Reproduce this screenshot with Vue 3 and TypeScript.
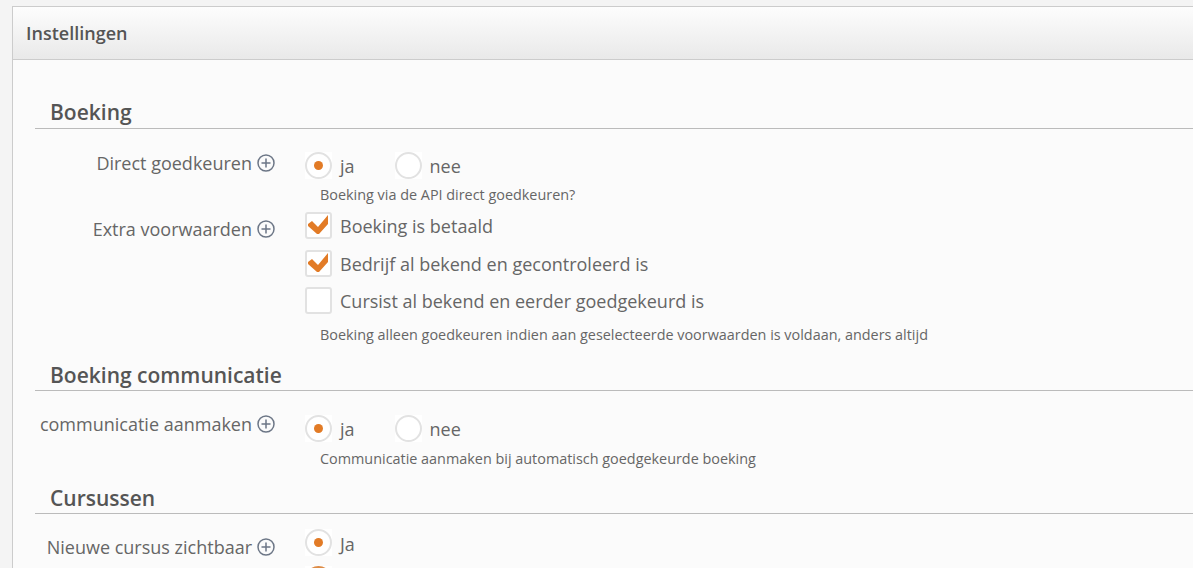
<script setup lang="ts">
interface Opt { label: string; on: boolean }
const plus = 'M9 4.5v9M4.5 9h9'
const bookingRadios: Opt[] = [{ label: 'ja', on: true }, { label: 'nee', on: false }]
const checks: Opt[] = [
  { label: 'Boeking is betaald', on: true },
  { label: 'Bedrijf al bekend en gecontroleerd is', on: true },
  { label: 'Cursist al bekend en eerder goedgekeurd is', on: false }
]
</script>

<template>
  <div class="page">
    <section class="panel">
      <header class="head">Instellingen</header>
      <div class="body">
        <h2 class="sec first">Boeking</h2>
        <div class="row r1">
          <div class="lab">Direct goedkeuren<svg class="plus" viewBox="0 0 18 18"><circle cx="9" cy="9" r="8" /><path :d="plus" /></svg></div>
          <div class="ctl">
            <div class="radios">
              <label v-for="o in bookingRadios" :key="o.label" class="radio"><span class="rb"><span class="rc" :class="{ on: o.on }"></span></span><span class="t">{{ o.label }}</span></label>
            </div>
            <p class="help">Boeking via de API direct goedkeuren?</p>
          </div>
        </div>
        <div class="row r2">
          <div class="lab">Extra voorwaarden<svg class="plus" viewBox="0 0 18 18"><circle cx="9" cy="9" r="8" /><path :d="plus" /></svg></div>
          <div class="ctl">
            <div class="checks">
              <label v-for="c in checks" :key="c.label" class="check">
                <span class="cb"><svg v-if="c.on" viewBox="0 0 23 23"><path d="M1 10 5 7 11 13 21 1 21 10 12 20 10 20 1 12Z" /></svg></span>
                <span class="t">{{ c.label }}</span>
              </label>
            </div>
            <p class="help h2">Boeking alleen goedkeuren indien aan geselecteerde voorwaarden is voldaan, anders altijd</p>
          </div>
        </div>
        <h2 class="sec s2">Boeking communicatie</h2>
        <div class="row r1 r3">
          <div class="lab">communicatie aanmaken<svg class="plus" viewBox="0 0 18 18"><circle cx="9" cy="9" r="8" /><path :d="plus" /></svg></div>
          <div class="ctl">
            <div class="radios">
              <label v-for="o in bookingRadios" :key="o.label" class="radio"><span class="rb"><span class="rc" :class="{ on: o.on }"></span></span><span class="t">{{ o.label }}</span></label>
            </div>
            <p class="help h3">Communicatie aanmaken bij automatisch goedgekeurde boeking</p>
          </div>
        </div>
        <h2 class="sec s3">Cursussen</h2>
        <div class="row r4">
          <div class="lab">Nieuwe cursus zichtbaar<svg class="plus" viewBox="0 0 18 18"><circle cx="9" cy="9" r="8" /><path :d="plus" /></svg></div>
          <div class="ctl">
            <label class="radio"><span class="rb"><span class="rc on"></span></span><span class="t">Ja</span></label>
            <label class="radio next"><span class="rb"><span class="rc"></span></span></label>
          </div>
        </div>
      </div>
    </section>
  </div>
</template>

<style>
html, body { margin: 0; height: 100%; overflow: hidden; background: #f4f4f4; }
</style>

<style scoped>
.page { height: 568px; overflow: hidden; padding: 6px 0 0 12px; box-sizing: border-box; font-family: "Open Sans", "Noto Sans", sans-serif; color: #555; }
.panel { border: 1px solid #ccc; border-right: 0; border-bottom: 0; background: #fbfbfb; height: 600px; }
.head { height: 52px; line-height: 52px; padding-left: 13px; font-size: 18px; font-weight: 600; color: #555; background: linear-gradient(#fdfdfd, #e9e9e9); border-bottom: 1px solid #ccc; }
.body { padding-left: 22px; }
.sec { margin: 0; font-size: 21px; font-weight: 600; line-height: 25px; height: 28px; color: #555; padding-left: 15px; border-bottom: 1px solid #bbb; }
.first { margin-top: 40px; }
.s2 { margin-top: 18px; line-height: 27px; }
.s3 { margin-top: 17px; line-height: 27px; }
.row { display: flex; }
.lab { width: 240px; flex: none; box-sizing: border-box; display: flex; justify-content: flex-end; align-items: center; height: 24px; font-size: 18px; white-space: nowrap; color: #666; }
.plus { width: 18px; height: 18px; margin-left: 5px; flex: none; fill: none; stroke: #6c7686; stroke-width: 1.5; }
.ctl { margin-left: 30px; }
.r1 { margin-top: 22px; }
.r2 { margin-top: 7px; }
.r2 .lab { margin-top: 6px; }
.r3 { margin-top: 23px; }
.r3 .lab { margin-top: -2px; }
.r4 { margin-top: 14px; }
.r4 .lab { margin-top: 7px; }
.r4 .t { padding-top: 3px; }
.radios { display: flex; gap: 40px; }
.radio { display: flex; align-items: center; height: 28px; }
.rb { width: 27px; height: 27px; background: #fff; flex: none; display: block; }
.rc { width: 27px; height: 27px; box-sizing: border-box; border: 2px solid #e2e2e2; border-radius: 50%; display: flex; align-items: center; justify-content: center; }
.rc.on::after { content: ""; width: 9px; height: 9px; border-radius: 50%; background: #e27b26; }
.t { font-size: 18px; margin-left: 8px; padding-top: 1px; color: #666; }
.next { margin-top: 9px; }
.next .rc { border-color: #dd8b45; }
.help { margin: 7px 0 0 15px; font-size: 14.4px; line-height: 18px; color: #666; white-space: nowrap; }
.h2 { margin-top: 12px; }
.h3 { margin-top: 8px; }
.checks { display: flex; flex-direction: column; gap: 10px; }
.check { display: flex; align-items: center; height: 28px; }
.check:last-child { margin-top: -1px; }
.cb { width: 27px; height: 27px; box-sizing: border-box; border: 2px solid #e2e2e2; border-radius: 3px; background: #fff; flex: none; }
.cb svg { display: block; width: 23px; height: 23px; fill: #e27b26; }
</style>
